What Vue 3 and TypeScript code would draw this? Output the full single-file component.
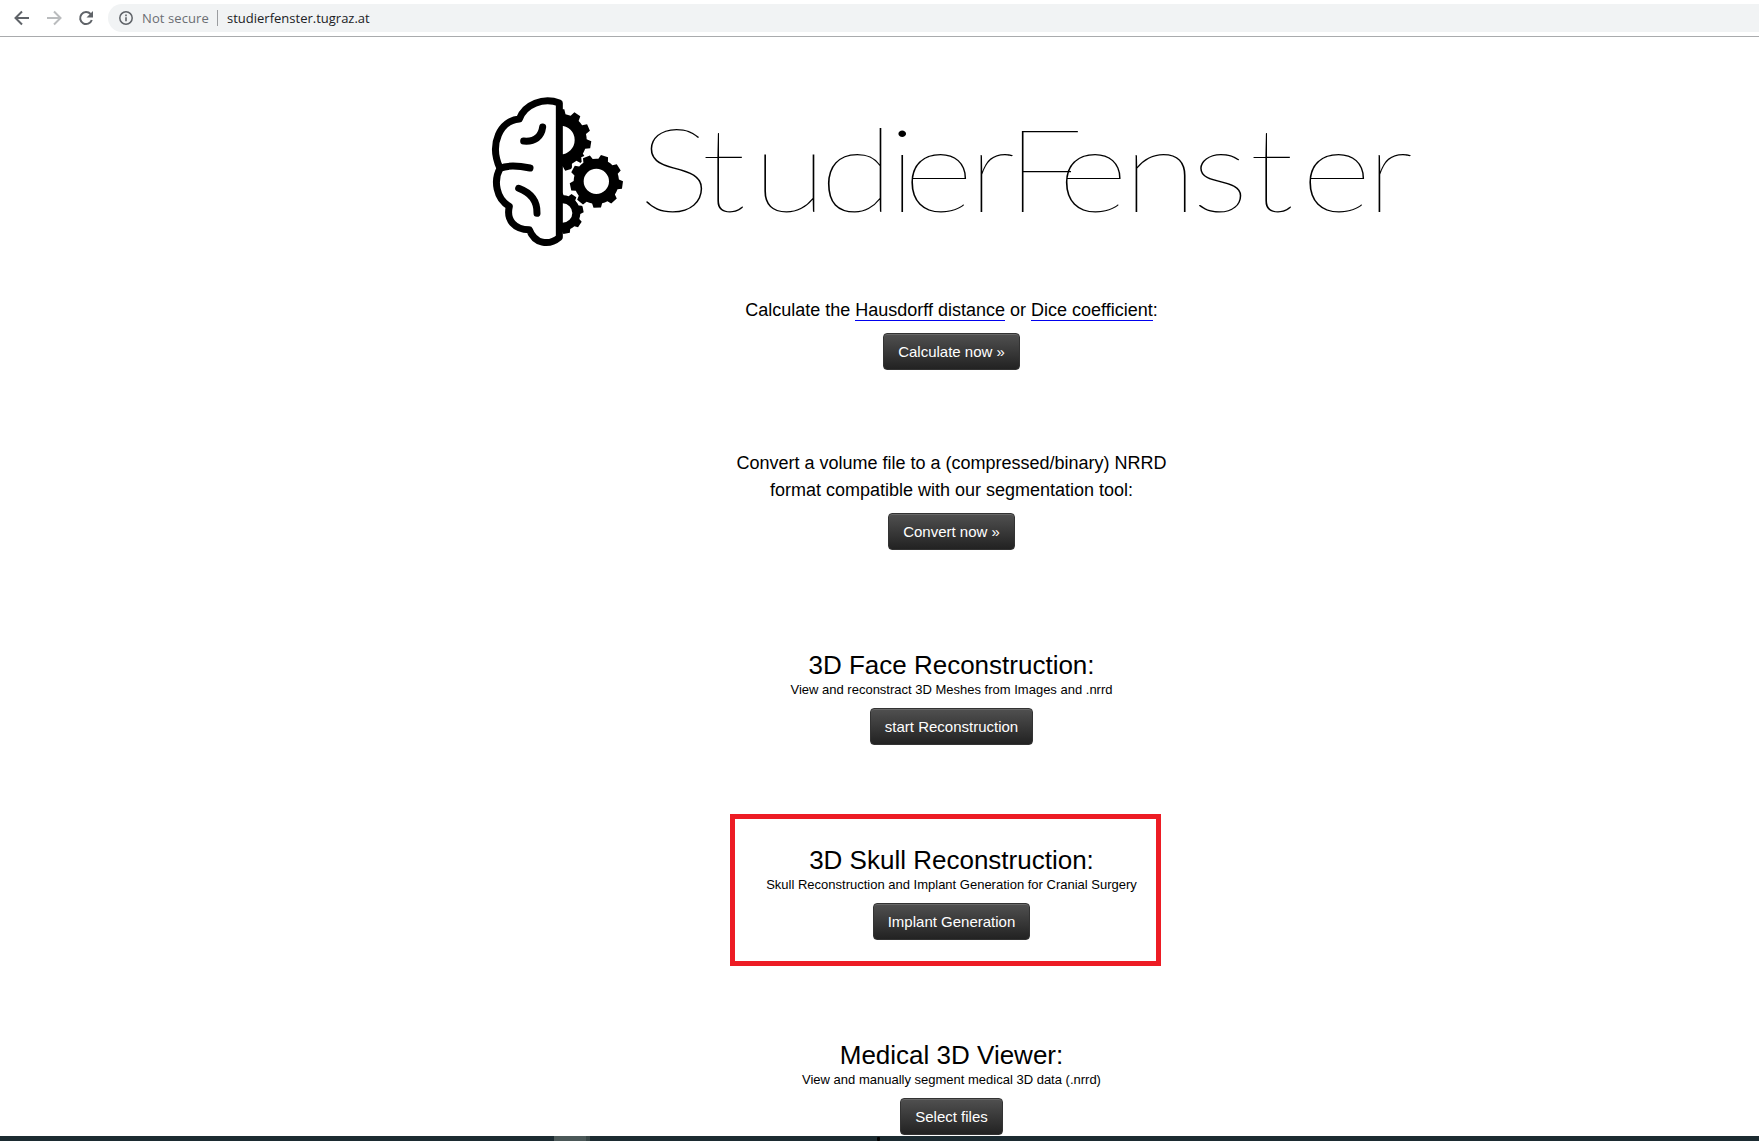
<script setup lang="ts">
interface Gear {
  cx: number
  cy: number
  root: number
  tip: number
  hole: number
  teeth: number
  offset: number
}

const leftGears: Gear[] = [
  { cx: 241, cy: 165, root: 79, tip: 93, hole: 43, teeth: 11, offset: 9 },
  { cx: 248, cy: 384, root: 53, tip: 63, hole: 29, teeth: 8, offset: -11 },
]
const frontGear: Gear = { cx: 349, cy: 289, root: 68, tip: 80, hole: 38, teeth: 9, offset: 8 }

function gearPath(g: Gear): string {
  const step = 360 / g.teeth
  const point = (r: number, deg: number) => {
    const a = (deg * Math.PI) / 180
    return `${(g.cx + r * Math.cos(a)).toFixed(1)} ${(g.cy + r * Math.sin(a)).toFixed(1)}`
  }
  const parts: string[] = []
  for (let i = 0; i < g.teeth; i++) {
    const a = g.offset + i * step
    const r = g.root
    parts.push(
      `${i ? 'L' : 'M'}${point(r, a - step * 0.32)}`,
      `L${point(g.tip, a - step * 0.2)}`,
      `L${point(g.tip, a + step * 0.2)}`,
      `L${point(r, a + step * 0.32)}`,
      `A${r} ${r} 0 0 1 ${point(r, a + step * 0.68)}`,
    )
  }
  const h = g.hole
  return `${parts.join('')}ZM${g.cx - h} ${g.cy}a${h} ${h} 0 1 0 ${2 * h} 0a${h} ${h} 0 1 0 ${-2 * h} 0Z`
}

// The wordmark is widened horizontally, with every letter on its own origin.
const stretch = 1.18
const wordmarkX = [638.5, 701, 752.5, 819.5, 888, 903, 968, 1006, 1057.5, 1123, 1191.5, 1249, 1301, 1366]
  .map((x) => (x / stretch).toFixed(2))
  .join(' ')
</script>

<template>
  <div class="window">
    <header class="toolbar">
      <svg class="nav" width="96" height="36" viewBox="0 0 96 36" fill="none" stroke-width="2">
        <path d="M29 18H16M22 11.5L15.500 18l6.500 6.500" stroke="#5f6368" />
        <path d="M47 18h13M54 11.500l6.500 6.500-6.500 6.500" stroke="#babcbe" />
        <path d="M90.600 14A6 6 0 1 0 91.800 20" stroke="#5f6368" />
        <path d="M93 11v6.500h-6.500z" fill="#5f6368" />
      </svg>
      <div class="address">
        <svg class="info" width="16" height="16" viewBox="0 0 16 16">
          <circle cx="8" cy="8" r="6.200" fill="none" stroke="#5f6368" stroke-width="1.500" />
          <path d="M7.200 7.200h1.600v4H7.200zM7.200 4.600h1.600v1.600H7.200z" fill="#5f6368" />
        </svg>
        <span class="security">Not secure</span>
        <span class="divider"></span>
        <span class="url">studierfenster.tugraz.at</span>
      </div>
    </header>

    <main class="page">
      <div class="logo">
        <svg class="brain" width="160" height="170" viewBox="0 0 480 510">
          <clipPath id="right-half"><rect x="238" y="0" width="242" height="510" /></clipPath>
          <g clip-path="url(#right-half)" fill-rule="evenodd">
            <path v-for="(g, i) in leftGears" :key="i" :d="gearPath(g)" />
          </g>
          <path :d="gearPath(frontGear)" stroke="#fff" stroke-width="10" />
          <path :d="gearPath(frontGear)" fill-rule="evenodd" />
          <g fill="none" stroke="#000" stroke-width="21" stroke-linecap="round" stroke-linejoin="round">
            <path d="M238 54C190 36 134 58 118 102C62 106 26 176 60 250C40 286 48 342 88 364C78 406 104 434 148 434C164 476 206 484 238 457Z" />
            <path d="M60 250C80 241 110 241 150 249" />
            <path d="M131 168C164 171 184 156 188 126" />
            <path d="M116 310C154 324 172 348 171 385" />
          </g>
        </svg>
        <svg class="wordmark" width="800" height="170" viewBox="630 85 800 170">
          <text :transform="`scale(${stretch} 1)`" :x="wordmarkX" y="212">StudierFenster</text>
        </svg>
      </div>

      <section class="tool metrics">
        <p>Calculate the <a>Hausdorff distance</a> or <a>Dice coefficient</a>:</p>
        <button>Calculate now »</button>
      </section>
      <section class="tool convert">
        <p>Convert a volume file to a (compressed/binary) NRRD<br />format compatible with our segmentation tool:</p>
        <button>Convert now »</button>
      </section>
      <section class="tool face">
        <h2>3D Face Reconstruction:</h2>
        <small>View and reconstract 3D Meshes from Images and .nrrd</small>
        <button>start Reconstruction</button>
      </section>
      <section class="tool skull">
        <h2>3D Skull Reconstruction:</h2>
        <small>Skull Reconstruction and Implant Generation for Cranial Surgery</small>
        <button>Implant Generation</button>
        <div class="highlight"></div>
      </section>
      <section class="tool viewer">
        <h2>Medical 3D Viewer:</h2>
        <small>View and manually segment medical 3D data (.nrrd)</small>
        <button>Select files</button>
      </section>
    </main>

    <footer class="taskbar">
      <span class="active-task"></span>
      <span class="task-edge"></span>
      <span class="task-mark"></span>
    </footer>
  </div>
</template>

<style>
body {
  margin: 0;
  overflow: hidden;
}
</style>

<style scoped>
.window {
  display: flex;
  flex-direction: column;
  width: 1759px;
  height: 1141px;
  overflow: hidden;
  background: #fff;
  color: #000;
  font-family: "Liberation Sans", Arial, sans-serif;
}
.toolbar {
  display: flex;
  box-sizing: border-box;
  flex: none;
  height: 37px;
  border-bottom: 1px solid #a9abad;
  font: 13px/28px "Open Sans", "Noto Sans", sans-serif;
}
.nav {
  flex: none;
  margin-right: 12px;
}
.address {
  display: flex;
  align-items: center;
  flex: 1;
  height: 28px;
  margin-top: 4px;
  padding-left: 10px;
  border-radius: 14px 0 0 14px;
  background: #f1f3f4;
  white-space: nowrap;
}
.info {
  flex: none;
  margin-right: 8px;
}
.security {
  width: 75px;
  color: #6b6e73;
  letter-spacing: 0.1px;
}
.divider {
  width: 1px;
  height: 16px;
  margin-right: 9px;
  background: #9b9da0;
}
.url {
  color: #202124;
}
.page {
  flex: none;
  width: 1903px;
  height: 1099px;
  overflow: hidden;
}
.logo {
  display: flex;
  height: 170px;
  margin: 48px 0 0 480px;
}
.brain {
  flex: none;
}
.wordmark {
  flex: none;
  margin-left: -10px;
}
.wordmark text {
  font-family: Lato, sans-serif;
  font-size: 116px;
  font-weight: 100;
}
.tool {
  position: relative;
  display: flex;
  flex-direction: column;
  align-items: center;
  text-align: center;
}
.tool p {
  margin: 0;
  font-size: 18px;
  line-height: 27px;
}
.tool a {
  border-bottom: 1px solid #0000ee;
}
.tool h2 {
  margin: 0;
  font-size: 26px;
  font-weight: 400;
  line-height: 30px;
}
.tool small {
  padding-top: 1px;
  font-size: 13px;
  line-height: 18px;
}
.tool button {
  height: 37px;
  margin-top: 9px;
  padding: 0 14px;
  border: 1px solid #333;
  border-radius: 4px;
  background: linear-gradient(#505050, #222);
  box-shadow: inset 0 1px 0 #686868;
  color: #fff;
  font: 15px/35px "Liberation Sans", Arial, sans-serif;
}
.metrics {
  margin-top: 42px;
}
.convert {
  margin-top: 80px;
}
.face,
.skull,
.viewer {
  margin-top: 100px;
}
.highlight {
  position: absolute;
  box-sizing: border-box;
  left: 730px;
  top: -31px;
  width: 431px;
  height: 152px;
  border: 5px solid #ed1c24;
}
.taskbar {
  display: flex;
  flex: none;
  height: 5px;
  background: #1c2b31;
}
.active-task {
  width: 32px;
  margin-left: 554px;
  background: #4b5858;
}
.task-edge {
  width: 4px;
  background: #394747;
}
.task-mark {
  width: 3px;
  height: 4px;
  margin: 1px 0 0 287px;
  border-radius: 1px;
  background: #000;
}
</style>
